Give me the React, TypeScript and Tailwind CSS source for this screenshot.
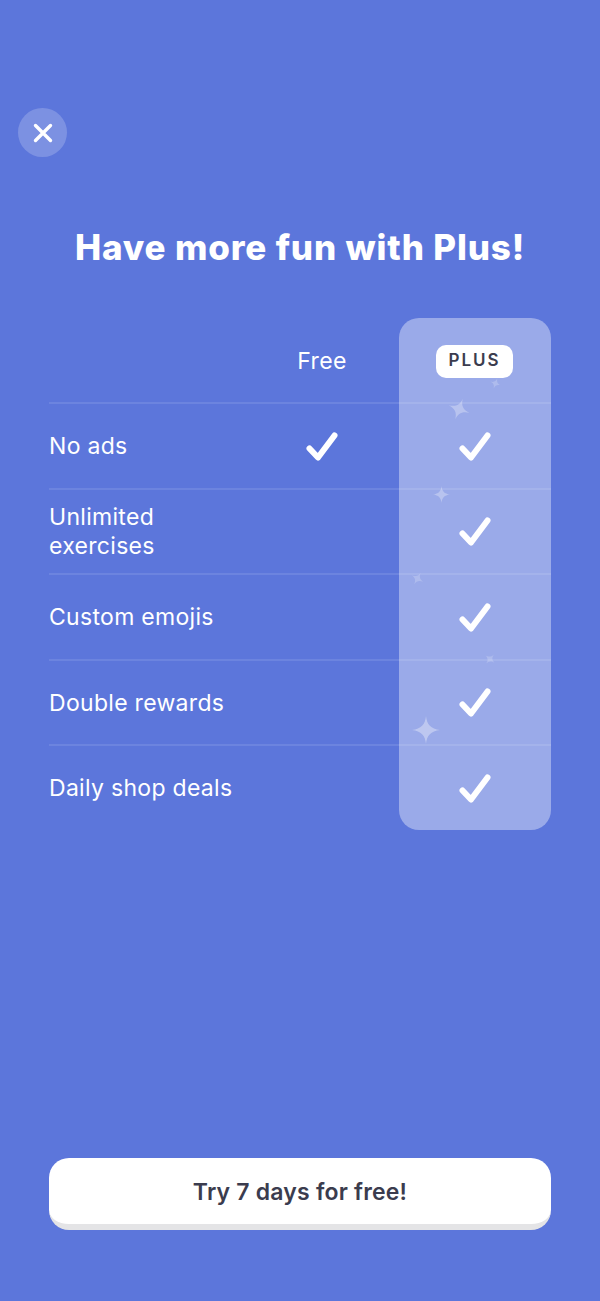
import React from 'react';

const rows = [
    { label: ['No ads'], free: true },
    { label: ['Unlimited', 'exercises'], free: false },
    { label: ['Custom emojis'], free: false },
    { label: ['Double rewards'], free: false },
    { label: ['Daily shop deals'], free: false },
];

const sparkles = [
    { cls: 'left-[399px] top-[80px] w-[22px] h-[22px] rotate-[20deg] opacity-30' },
    { cls: 'left-[441px] top-[60px] w-[11px] h-[11px] rotate-[20deg] opacity-20' },
    { cls: 'left-[384px] top-[168px] w-[17px] h-[17px] opacity-30' },
    { cls: 'left-[362px] top-[254px] w-[13px] h-[13px] rotate-[30deg] opacity-20' },
    { cls: 'left-[435px] top-[335px] w-[12px] h-[12px] rotate-[40deg] opacity-20' },
    { cls: 'left-[363px] top-[398px] w-[28px] h-[28px] opacity-35' },
];

const Check = () => (
    <svg width="32" height="30" viewBox="0 0 32 30" fill="none">
        <path d="M3.5 16.5 L12 25.5 L28.5 3.5" stroke="white" strokeWidth="6" strokeLinecap="round" strokeLinejoin="round" />
    </svg>
);

const Sparkle = ({ className }: { className: string }) => (
    <svg className={`absolute ${className}`} viewBox="0 0 24 24" fill="white">
        <path d="M12 0 C12.8 7.5 16 11 24 12 C16 13 12.8 16.5 12 24 C11.2 16.5 8 13 0 12 C8 11 11.2 7.5 12 0 Z" />
    </svg>
);

export default function App() {
    return (
        <div className="w-[600px] h-[1301px] bg-[#5C76DB] flex flex-col overflow-hidden font-['Inter',sans-serif] text-white">
            <div className="pt-[108px] pl-[18px]">
                <button className="w-[49px] h-[49px] rounded-full bg-white/20 flex items-center justify-center">
                    <svg width="20" height="20" viewBox="0 0 20 20" fill="none">
                        <path d="M2.5 2.5 L17.5 17.5 M17.5 2.5 L2.5 17.5" stroke="white" strokeWidth="3.4" strokeLinecap="round" />
                    </svg>
                </button>
            </div>

            <h1 className="mt-[68px] text-center text-[35px] leading-[44px] font-extrabold tracking-[0.85px]">Have more fun with Plus!</h1>

            <div className="relative mt-[49px] mx-[49px]">
                <div className="absolute right-0 top-0 w-[152px] h-[512px] bg-white/38 rounded-[20px]" />
                {sparkles.map((s, i) => (
                    <Sparkle key={i} className={s.cls} />
                ))}

                <div className="relative grid grid-cols-[197px_152px_153px] h-[84px] items-center">
                    <div />
                    <div className="text-center text-[23px] tracking-[0.4px] pt-[2px]">Free</div>
                    <div className="flex justify-center pt-[2px]">
                        <span className="bg-white text-[#3B3C4E] rounded-[10px] w-[77px] h-[33px] flex items-center justify-center text-[17px] font-semibold tracking-[2px]">
                            PLUS
                        </span>
                    </div>
                </div>

                {rows.map((row, i) => (
                    <div key={i} className="relative grid grid-cols-[197px_152px_153px] h-[85.5px] items-center border-t-2 border-white/10">
                        <div className="text-[23px] leading-[29px] tracking-[0.3px] pt-[2px]">
                            {row.label.map(line => (
                                <div key={line}>{line}</div>
                            ))}
                        </div>
                        <div className="flex justify-center pt-[2px]">{row.free && <Check />}</div>
                        <div className="flex justify-center pt-[2px]"><Check /></div>
                    </div>
                ))}
            </div>

            <div className="mt-auto mb-[71px] mx-[49px] h-[72px] bg-white rounded-[20px] border-b-[6px] border-[#E4E4E6] flex items-center justify-center">
                <span className="text-[23px] font-semibold text-[#3B3C4E] tracking-[0.2px] pt-[2px]">Try 7 days for free!</span>
            </div>
        </div>
    );
}
